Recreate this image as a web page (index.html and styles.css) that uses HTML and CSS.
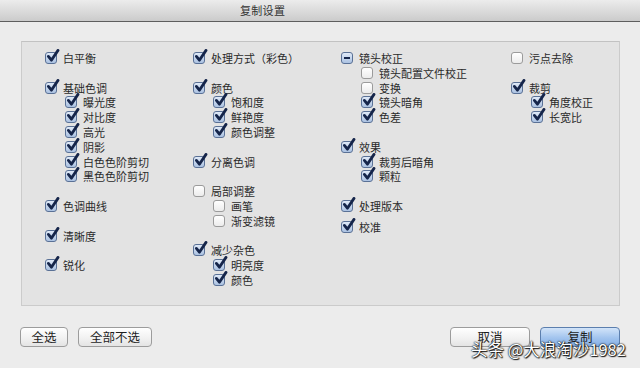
FILE: index.html
```html
<!DOCTYPE html>
<html lang="zh-CN">
<head>
    <meta charset="UTF-8">
    <title>复制设置</title>
    <link rel="stylesheet" href="styles.css">
</head>
<body>
    <svg width="0" height="0" class="defs">
        <symbol id="tick" viewBox="0 0 14 14">
            <path d="M2.4 7.4 L5.4 11.2 L12 1.4" fill="none" stroke="#15254a" stroke-width="2.8" stroke-linecap="round" stroke-linejoin="round"/>
        </symbol>
    </svg>

    <div class="window">
        <div class="titlebar">复制设置</div>

        <div class="panel">
            <!-- 第一列 -->
            <div class="col">
                <div class="row"><span class="cb on"><svg><use href="#tick"/></svg></span>白平衡</div>
                <div class="row gap"><span class="cb on"><svg><use href="#tick"/></svg></span>基础色调</div>
                <div class="row sub"><span class="cb on"><svg><use href="#tick"/></svg></span>曝光度</div>
                <div class="row sub"><span class="cb on"><svg><use href="#tick"/></svg></span>对比度</div>
                <div class="row sub"><span class="cb on"><svg><use href="#tick"/></svg></span>高光</div>
                <div class="row sub"><span class="cb on"><svg><use href="#tick"/></svg></span>阴影</div>
                <div class="row sub"><span class="cb on"><svg><use href="#tick"/></svg></span>白色色阶剪切</div>
                <div class="row sub"><span class="cb on"><svg><use href="#tick"/></svg></span>黑色色阶剪切</div>
                <div class="row gap"><span class="cb on"><svg><use href="#tick"/></svg></span>色调曲线</div>
                <div class="row gap"><span class="cb on"><svg><use href="#tick"/></svg></span>清晰度</div>
                <div class="row gap"><span class="cb on"><svg><use href="#tick"/></svg></span>锐化</div>
            </div>

            <!-- 第二列 -->
            <div class="col">
                <div class="row"><span class="cb on"><svg><use href="#tick"/></svg></span>处理方式（彩色）</div>
                <div class="row gap"><span class="cb on"><svg><use href="#tick"/></svg></span>颜色</div>
                <div class="row sub"><span class="cb on"><svg><use href="#tick"/></svg></span>饱和度</div>
                <div class="row sub"><span class="cb on"><svg><use href="#tick"/></svg></span>鲜艳度</div>
                <div class="row sub"><span class="cb on"><svg><use href="#tick"/></svg></span>颜色调整</div>
                <div class="row gap"><span class="cb on"><svg><use href="#tick"/></svg></span>分离色调</div>
                <div class="row gap"><span class="cb"></span>局部调整</div>
                <div class="row sub"><span class="cb"></span>画笔</div>
                <div class="row sub"><span class="cb"></span>渐变滤镜</div>
                <div class="row gap"><span class="cb on"><svg><use href="#tick"/></svg></span>减少杂色</div>
                <div class="row sub"><span class="cb on"><svg><use href="#tick"/></svg></span>明亮度</div>
                <div class="row sub"><span class="cb on"><svg><use href="#tick"/></svg></span>颜色</div>
            </div>

            <!-- 第三列 -->
            <div class="col">
                <div class="row"><span class="cb mixed"></span>镜头校正</div>
                <div class="row sub"><span class="cb"></span>镜头配置文件校正</div>
                <div class="row sub"><span class="cb"></span>变换</div>
                <div class="row sub"><span class="cb on"><svg><use href="#tick"/></svg></span>镜头暗角</div>
                <div class="row sub"><span class="cb on"><svg><use href="#tick"/></svg></span>色差</div>
                <div class="row gap"><span class="cb on"><svg><use href="#tick"/></svg></span>效果</div>
                <div class="row sub"><span class="cb on"><svg><use href="#tick"/></svg></span>裁剪后暗角</div>
                <div class="row sub"><span class="cb on"><svg><use href="#tick"/></svg></span>颗粒</div>
                <div class="row gap"><span class="cb on"><svg><use href="#tick"/></svg></span>处理版本</div>
                <div class="row tail"><span class="cb on"><svg><use href="#tick"/></svg></span>校准</div>
            </div>

            <!-- 第四列 -->
            <div class="col">
                <div class="row"><span class="cb"></span>污点去除</div>
                <div class="row gap"><span class="cb on"><svg><use href="#tick"/></svg></span>裁剪</div>
                <div class="row sub"><span class="cb on"><svg><use href="#tick"/></svg></span>角度校正</div>
                <div class="row sub"><span class="cb on"><svg><use href="#tick"/></svg></span>长宽比</div>
            </div>
        </div>

        <div class="footer">
            <div class="btns">
                <button class="btn btn-all">全选</button>
                <button class="btn btn-none">全部不选</button>
            </div>
            <div class="btns">
                <button class="btn btn-cancel">取消</button>
                <button class="btn btn-ok">复制</button>
            </div>
        </div>

        <div class="watermark">头条 @大浪淘沙1982</div>
    </div>
</body>
</html>
```

FILE: styles.css
```css
* {
    box-sizing: border-box;
}

body {
    margin: 0;
    width: 640px;
    height: 368px;
    overflow: hidden;
    background-color: #ececec;
    font-family: "Noto Sans CJK SC", "Liberation Sans", sans-serif;
    color: #2a2a2a;
}

.defs {
    position: absolute;
}

.window {
    position: relative;
    width: 640px;
    height: 368px;
}

.titlebar {
    height: 22px;
    padding-left: 240px;
    line-height: 21px;
    font-size: 11px;
    letter-spacing: 0.3px;
    color: #333;
    background: linear-gradient(#ececec, #cbcbcb);
    border-bottom: 1px solid #5e5e5e;
}

.panel {
    margin: 19px 20px 0 21px;
    height: 265px;
    padding: 8.6px 0 0 23px;
    display: grid;
    grid-template-columns: 148px 148px 170px 1fr;
    background-color: #e3e3e3;
    border: 1px solid #cbcbcb;
    border-top-color: #c2c2c2;
}

.col {
    display: flex;
    flex-direction: column;
}

.row {
    height: 14.8px;
    display: flex;
    align-items: center;
    gap: 6px;
    font-size: 11px;
    white-space: nowrap;
}

.row.sub {
    margin-left: 20px;
}

.row.gap {
    margin-top: 14.8px;
}

.row.tail {
    margin-top: 6.4px;
}

/* チェックボックス */
.cb {
    position: relative;
    flex: none;
    width: 12px;
    height: 12px;
    border: 1px solid #9b9b9b;
    border-radius: 3px;
    background: linear-gradient(#ffffff, #ececec);
}

.cb.on,
.cb.mixed {
    border-color: #5a7196;
    background: linear-gradient(#dfe9f7, #abc2e2);
}

.cb svg {
    position: absolute;
    left: 0;
    top: -4px;
    width: 14px;
    height: 14px;
    overflow: visible;
}

.cb.mixed::after {
    content: "";
    position: absolute;
    left: 2px;
    top: 4px;
    width: 6px;
    height: 2px;
    background-color: #15254a;
}

.footer {
    display: flex;
    justify-content: space-between;
    padding: 21px 20px 0 20px;
}

.btns {
    display: flex;
    gap: 10px;
}

.btn {
    height: 20px;
    padding: 0;
    font-family: "Noto Sans CJK SC", "Liberation Sans", sans-serif;
    font-size: 12.5px;
    line-height: 18px;
    color: #1e1e1e;
    border: 1px solid #9c9c9c;
    border-radius: 4px;
    background: linear-gradient(#ffffff, #f0f0f0 60%, #e4e4e4);
}

.btn-all {
    width: 48px;
}

.btn-none {
    width: 74px;
}

.btn-cancel {
    width: 80px;
}

.btn-ok {
    width: 80px;
    border-color: #5c7fae;
    background: linear-gradient(#d2e4f9, #a2c4ee 55%, #86b0e6);
}

.watermark {
    position: absolute;
    left: 471px;
    top: 339px;
    font-size: 16.5px;
    line-height: 20px;
    color: #ffffff;
    white-space: nowrap;
    text-shadow: 0 0 1px #000, 0 0 2px #000, 1px 1px 1px #222;
}
```
